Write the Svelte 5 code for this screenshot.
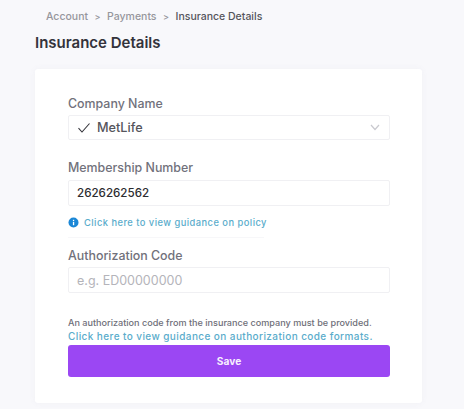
<script>
  const crumbs = ['Account', 'Payments'];
</script>

<main class="page">
  <nav class="crumbs">
    {#each crumbs as c}
      <span class="crumb">{c}</span><span class="sep">&gt;</span>
    {/each}
    <span class="current">Insurance Details</span>
  </nav>
  <h1>Insurance Details</h1>
  <section class="card">
    <div class="label first">Company Name</div>
    <div class="field select">
      <svg class="check" width="14" height="12" viewBox="0 0 14 12"><path d="M1.5 6.2 5 10 12.5 1.5" fill="none" stroke="#33333a" stroke-width="1.1"/></svg>
      <span class="metlife">MetLife</span>
      <svg class="chev" width="10" height="7" viewBox="0 0 10 7"><path d="M1 1 5 5.5 9 1" fill="none" stroke="#c9c9cf" stroke-width="1.2"/></svg>
    </div>
    <div class="label second">Membership Number</div>
    <div class="field value">2626262562</div>
    <div class="guidance">
      <svg width="11" height="11" viewBox="0 0 11 11"><circle cx="5.5" cy="5.5" r="5" fill="#1b87d6"/><rect x="4.9" y="4.8" width="1.3" height="3.4" fill="#fff"/><rect x="4.9" y="2.8" width="1.3" height="1.2" fill="#fff"/></svg>
      <span>Click here to view guidance on policy</span>
    </div>
    <div class="rule"></div>
    <div class="label third">Authorization Code</div>
    <div class="field placeholder">e.g. ED00000000</div>
    <p class="note">An authorization code from the insurance company must be provided.</p>
    <p class="link">Click here to view guidance on authorization code formats.</p>
    <button class="save">Save</button>
  </section>
</main>

<style>
  :global(body) {
    margin: 0;
    background: #f8f8fb;
  }
  .page {
    width: 464px;
    height: 409px;
    box-sizing: border-box;
    overflow: hidden;
    padding: 9px 42px 0 35px;
    font-family: "Inter", "Liberation Sans", sans-serif;
  }
  .crumbs {
    display: flex;
    align-items: center;
    height: 15px;
    padding-left: 11px;
    font-size: 10.5px;
    font-weight: 500;
    color: #96969c;
  }
  .sep {
    margin: 0 6.5px;
    font-size: 9px;
  }
  .current {
    color: #55555c;
  }
  h1 {
    margin: 9px 0 0;
    font-size: 15px;
    line-height: 20px;
    font-weight: 600;
    color: #33333b;
  }
  .card {
    margin-top: 16px;
    height: 334px;
    box-sizing: border-box;
    padding: 27px 32px 0 33px;
    background: #fff;
    border-radius: 3px;
    box-shadow: 0 0 6px rgba(120, 120, 150, 0.06);
  }
  .label {
    font-size: 12.4px;
    line-height: 16px;
    font-weight: 500;
    color: #71717b;
  }
  .first { margin-bottom: 3px; }
  .second { margin-top: 20px; margin-bottom: 4px; }
  .third { margin-top: 10px; margin-bottom: 3px; }
  .field {
    display: flex;
    align-items: center;
    box-sizing: border-box;
    height: 26px;
    padding-left: 8px;
    border: 1px solid #f0f0f3;
    border-radius: 2px;
    font-size: 12px;
  }
  .select {
    height: 25px;
    padding-right: 9px;
  }
  .check {
    margin-right: 6px;
  }
  .metlife {
    flex: 1;
    font-size: 12.7px;
    font-weight: 500;
    color: #55555c;
  }
  .value {
    font-size: 11.6px;
    color: #2c2c30;
    font-weight: 500;
  }
  .placeholder {
    font-size: 12.5px;
    color: #b4b4ba;
  }
  .guidance {
    display: flex;
    align-items: center;
    gap: 5px;
    margin-top: 10px;
    height: 12px;
    font-size: 9.3px;
    font-weight: 500;
    letter-spacing: 0.48px;
    color: #5aaccb;
  }
  .rule {
    width: 196px;
    height: 1px;
    margin-top: 9px;
    background: #f7f7f9;
  }
  .note {
    margin: 23px 0 0;
    font-size: 9.1px;
    line-height: 13px;
    font-weight: 500;
    color: #6e6e78;
    white-space: nowrap;
  }
  .link {
    margin: 0;
    font-size: 10px;
    line-height: 14px;
    font-weight: 500;
    letter-spacing: 0.41px;
    color: #5aaccb;
    white-space: nowrap;
  }
  .save {
    display: block;
    width: 100%;
    height: 32px;
    margin-top: 2px;
    border: none;
    border-radius: 3px;
    background: #9b47f3;
    color: #f7effe;
    font-family: inherit;
    font-size: 10.2px;
    font-weight: 700;
  }
</style>
